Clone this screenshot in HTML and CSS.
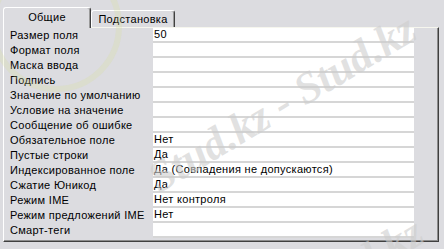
FILE: index.html
```html
<!DOCTYPE html>
<html lang="ru">
<head>
  <meta charset="UTF-8">
  <title>Свойства поля</title>
  <link rel="stylesheet" href="styles.css">
</head>
<body>
  <div class="window">
    <div class="tabs">
      <div class="tab active">Общие</div>
      <div class="tab">Подстановка</div>
    </div>

    <div class="panel">
      <div class="props">
        <div class="label">Размер поля</div><div class="value">50</div>
        <div class="label">Формат поля</div><div class="value"></div>
        <div class="label">Маска ввода</div><div class="value"></div>
        <div class="label">Подпись</div><div class="value"></div>
        <div class="label">Значение по умолчанию</div><div class="value"></div>
        <div class="label">Условие на значение</div><div class="value"></div>
        <div class="label">Сообщение об ошибке</div><div class="value"></div>
        <div class="label">Обязательное поле</div><div class="value">Нет</div>
        <div class="label">Пустые строки</div><div class="value">Да</div>
        <div class="label">Индексированное поле</div><div class="value">Да (Совпадения не допускаются)</div>
        <div class="label">Сжатие Юникод</div><div class="value">Да</div>
        <div class="label">Режим IME</div><div class="value">Нет контроля</div>
        <div class="label">Режим предложений IME</div><div class="value">Нет</div>
        <div class="label">Смарт-теги</div><div class="value"></div>
      </div>
    </div>

    <!-- водяной знак поверх всего -->
    <div class="logo-mark"></div>
    <div class="watermark wm-main" aria-hidden="true">Stud.kz - Stud.kz</div>
    <div class="watermark wm-low" aria-hidden="true">Stud.kz</div>
  </div>
</body>
</html>
```

FILE: styles.css
```css
body {
  margin: 0;
  background: #dcdce0;
  font-family: 'Liberation Sans', Arial, sans-serif;
  font-size: 11px;
  letter-spacing: 0.3px;
  color: #000;
}
.window {
  position: relative;
  width: 444px;
  height: 249px;
  overflow: hidden;
  padding-top: 7px;
  box-sizing: border-box;
}
.tabs {
  display: flex;
  align-items: flex-end;
  padding-left: 3px;
  height: 20px;
}
.tab {
  box-sizing: border-box;
  width: 84px;
  height: 17px;
  border-left: 1px solid #fff;
  border-top: 1px solid #fff;
  border-right: 1px solid #404040;
  border-radius: 3px 3px 0 0;
  box-shadow: inset -1px 0 0 #9a9a9a;
  text-align: center;
  line-height: 16px;
}
.tab.active {
  width: 88px;
  height: 21px;
  line-height: 18px;
  margin-bottom: -1px;
  position: relative;
  background: #dcdce0;
}
.panel {
  box-sizing: border-box;
  margin-left: 3px;
  width: 436px;
  height: 215px;
  border-top: 1px solid #f6f6ee;
  border-left: 1px solid #fff;
  border-right: 1px solid #404040;
  border-bottom: 1px solid #404040;
  box-shadow: inset -1px -1px 0 #8c8c8c;
}
.props {
  display: grid;
  grid-template-columns: 149px 261px;
  grid-auto-rows: 15px;
}
.label {
  padding-left: 6px;
  line-height: 14px;
  white-space: nowrap;
}
.value {
  background: #fff;
  border-bottom: 2px solid #d6d6d6;
  padding-left: 1px;
  line-height: 13px;
  white-space: nowrap;
}
.watermark {
  position: absolute;
  font-family: 'Liberation Serif', serif;
  font-weight: bold;
  font-style: italic;
  font-size: 44px;
  letter-spacing: 0;
  color: rgba(205, 205, 205, 0.6);
  white-space: nowrap;
  transform-origin: left bottom;
  transform: rotate(-31deg);
  pointer-events: none;
}
.wm-main {
  left: 165px;
  top: 152px;
}
.wm-low {
  left: 318px;
  top: 268px;
}
.logo-mark {
  position: absolute;
  left: -10px;
  top: -40px;
  width: 120px;
  height: 120px;
  border-radius: 50%;
  border: 6px solid rgba(215, 225, 150, 0.25);
  pointer-events: none;
}
```
